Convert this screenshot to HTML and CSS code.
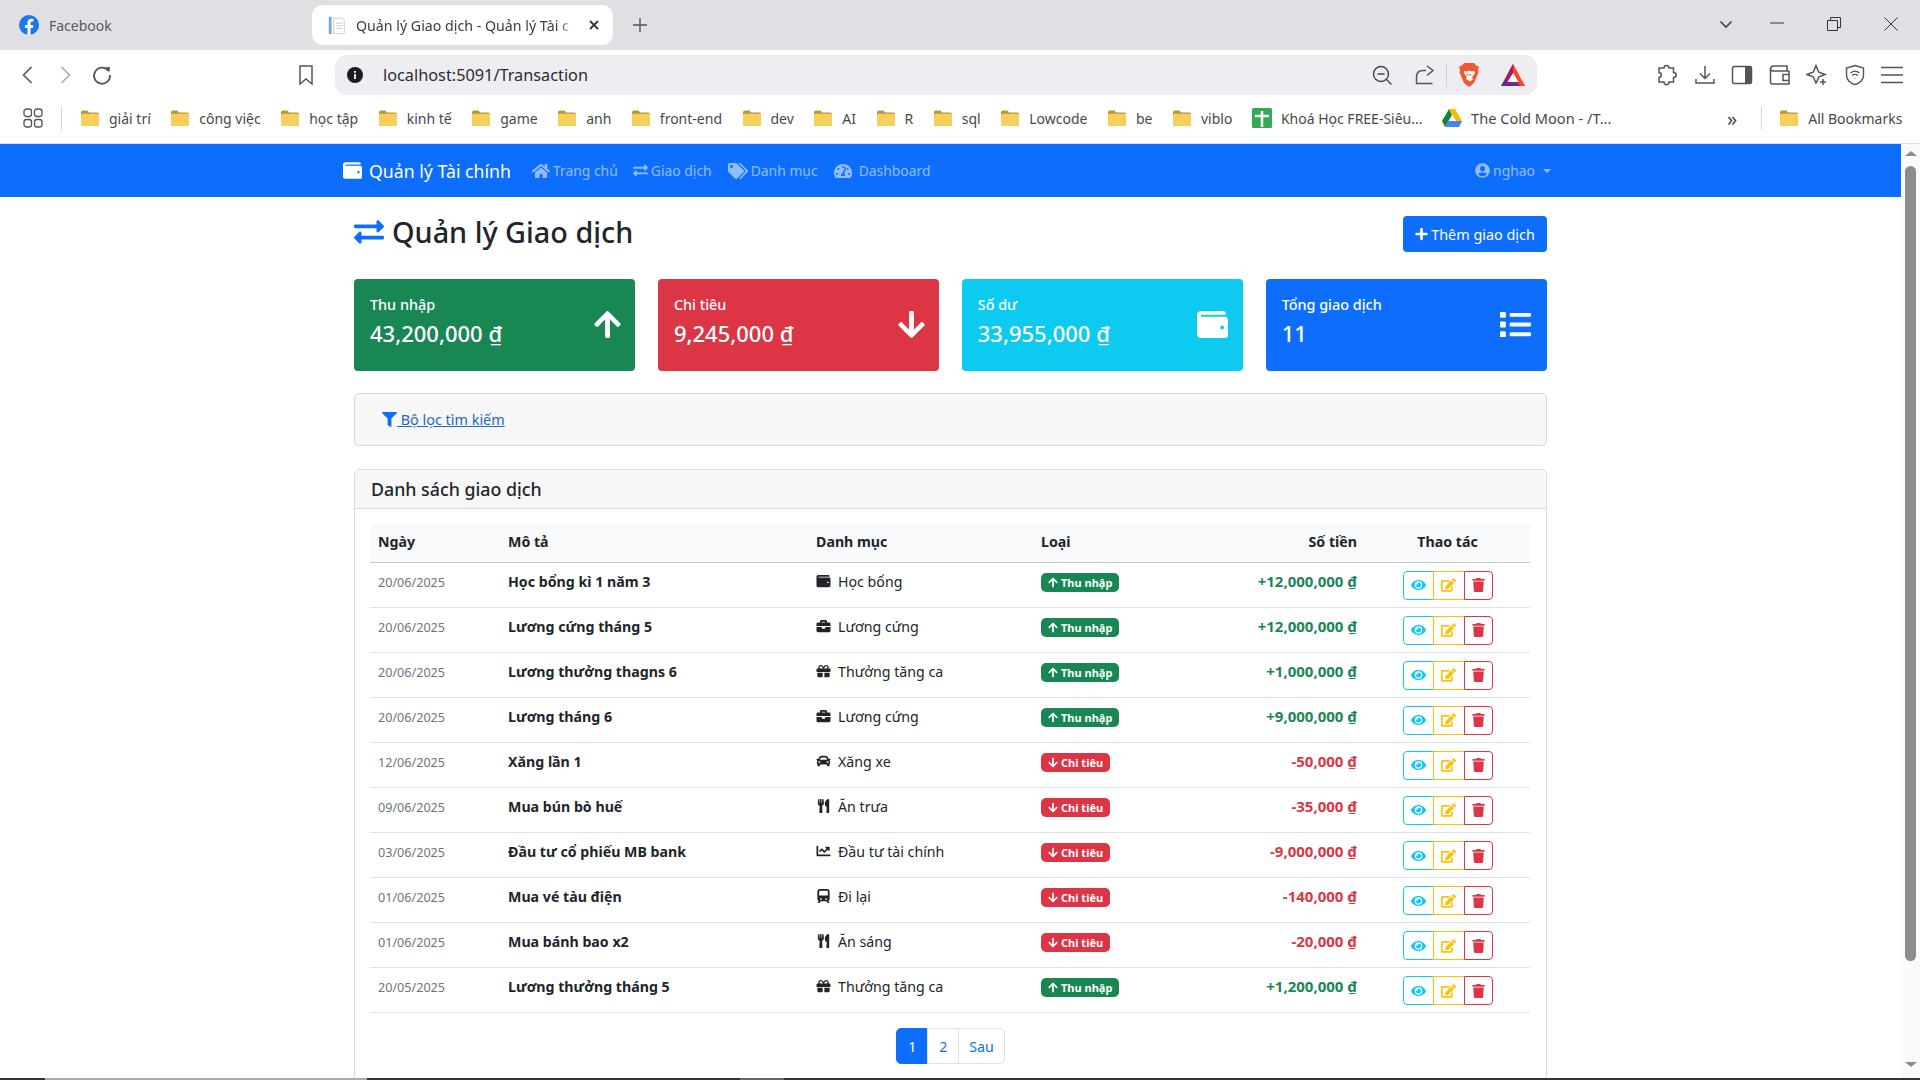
FILE: index.html

```html
<!DOCTYPE html>
<html lang="vi">
<head>
  <meta charset="UTF-8" />
  <meta name="viewport" content="width=device-width, initial-scale=1.0" />
  <title>Quản lý Giao dịch - Quản lý Tài chính</title>
  <link rel="stylesheet" href="styles.css">
</head>
<body>

  <!-- icon sprite -->
  <svg class="sprite" xmlns="http://www.w3.org/2000/svg">
    <symbol id="i-up" viewBox="0 0 448 512"><path d="M34.9 289.5l-22.2-22.2c-9.4-9.4-9.4-24.6 0-33.9L207 39c9.4-9.4 24.6-9.4 33.9 0l194.3 194.3c9.4 9.4 9.4 24.6 0 33.9L413 289.4c-9.5 9.5-25 9.3-34.3-.4L264 168.6V456c0 13.3-10.7 24-24 24h-32c-13.3 0-24-10.7-24-24V168.6L69.2 289.1c-9.3 9.8-24.8 10-34.3.4z"/></symbol>
    <symbol id="i-down" viewBox="0 0 448 512"><path d="M413.1 222.5l22.2 22.2c9.4 9.4 9.4 24.6 0 33.9L241 473c-9.4 9.4-24.6 9.4-33.9 0L12.7 278.6c-9.4-9.4-9.4-24.6 0-33.9l22.2-22.2c9.5-9.5 25-9.3 34.3.4L184 343.4V56c0-13.3 10.7-24 24-24h32c13.3 0 24 10.7 24 24v287.4l114.8-120.5c9.3-9.8 24.8-10 34.3-.4z"/></symbol>
    <symbol id="i-plus" viewBox="0 0 448 512"><path d="M416 208H272V64c0-17.67-14.33-32-32-32h-32c-17.67 0-32 14.33-32 32v144H32c-17.67 0-32 14.33-32 32v32c0 17.67 14.33 32 32 32h144v144c0 17.67 14.33 32 32 32h32c17.67 0 32-14.33 32-32V304h144c17.67 0 32-14.33 32-32v-32c0-17.67-14.33-32-32-32z"/></symbol>
    <symbol id="i-exchange" viewBox="0 0 512 512"><path d="M0 168v-16c0-13.255 10.745-24 24-24h360V80c0-21.367 25.899-32.042 40.971-16.971l80 80c9.372 9.373 9.372 24.569 0 33.941l-80 80C409.956 271.982 384 261.456 384 240v-48H24c-13.255 0-24-10.745-24-24zm488 152H128v-48c0-21.314-25.862-32.08-40.971-16.971l-80 80c-9.372 9.373-9.372 24.569 0 33.941l80 80C102.057 463.997 128 453.437 128 432v-48h360c13.255 0 24-10.745 24-24v-16c0-13.255-10.745-24-24-24z"/></symbol>
    <symbol id="i-wallet" viewBox="0 0 512 512"><path d="M461.2 128H80c-8.84 0-16-7.16-16-16s7.16-16 16-16h384c8.84 0 16-7.16 16-16 0-26.51-21.49-48-48-48H64C28.65 32 0 60.65 0 96v320c0 35.35 28.65 64 64 64h397.2c28.02 0 50.8-21.53 50.8-48V176c0-26.47-22.78-48-50.8-48zM416 336c-17.67 0-32-14.33-32-32s14.33-32 32-32 32 14.33 32 32-14.33 32-32 32z"/></symbol>
    <symbol id="i-list" viewBox="0 0 512 512"><path d="M80 368H16a16 16 0 0 0-16 16v64a16 16 0 0 0 16 16h64a16 16 0 0 0 16-16v-64a16 16 0 0 0-16-16zm0-320H16A16 16 0 0 0 0 64v64a16 16 0 0 0 16 16h64a16 16 0 0 0 16-16V64a16 16 0 0 0-16-16zm0 160H16a16 16 0 0 0-16 16v64a16 16 0 0 0 16 16h64a16 16 0 0 0 16-16v-64a16 16 0 0 0-16-16zm416 176H176a16 16 0 0 0-16 16v32a16 16 0 0 0 16 16h320a16 16 0 0 0 16-16v-32a16 16 0 0 0-16-16zm0-320H176a16 16 0 0 0-16 16v32a16 16 0 0 0 16 16h320a16 16 0 0 0 16-16V80a16 16 0 0 0-16-16zm0 160H176a16 16 0 0 0-16 16v32a16 16 0 0 0 16 16h320a16 16 0 0 0 16-16v-32a16 16 0 0 0-16-16z"/></symbol>
    <symbol id="i-filter" viewBox="0 0 512 512"><path d="M487.976 0H24.028C2.71 0-8.047 25.866 7.058 40.971L192 225.941V432c0 7.831 3.821 15.17 10.237 19.662l80 55.98C298.02 518.69 320 507.493 320 487.98V225.941l184.947-184.97C520.021 25.896 509.338 0 487.976 0z"/></symbol>
    <symbol id="i-trash" viewBox="0 0 448 512"><path d="M432 32H312l-9.4-18.7A24 24 0 0 0 281.1 0H166.8a23.72 23.72 0 0 0-21.4 13.3L136 32H16A16 16 0 0 0 0 48v32a16 16 0 0 0 16 16h416a16 16 0 0 0 16-16V48a16 16 0 0 0-16-16zM53.2 467a48 48 0 0 0 47.9 45h245.8a48 48 0 0 0 47.9-45L416 128H32z"/></symbol>
    <symbol id="i-eye" viewBox="0 0 576 512"><path d="M572.52 241.4C518.29 135.59 410.93 64 288 64S57.68 135.64 3.48 241.41a32.35 32.35 0 0 0 0 29.19C57.71 376.41 165.07 448 288 448s230.32-71.64 284.52-177.41a32.35 32.35 0 0 0 0-29.19zM288 400a144 144 0 1 1 144-144 143.93 143.93 0 0 1-144 144zm0-240a95.31 95.31 0 0 0-25.31 3.79 47.85 47.85 0 0 1-66.9 66.9A95.78 95.78 0 1 0 288 160z"/></symbol>
    <symbol id="i-edit" viewBox="0 0 576 512"><path d="M402.6 83.2l90.2 90.2c3.8 3.8 3.8 10 0 13.8L274.4 405.6l-92.8 10.3c-12.4 1.4-22.9-9.1-21.5-21.5l10.3-92.8L388.8 83.2c3.8-3.8 10-3.8 13.8 0zm162-22.9l-48.8-48.8c-15.2-15.2-39.9-15.2-55.2 0l-35.4 35.4c-3.8 3.8-3.8 10 0 13.8l90.2 90.2c3.8 3.8 10 3.8 13.8 0l35.4-35.4c15.2-15.3 15.2-40 0-55.2zM384 346.2V448H64V128h229.8c3.2 0 6.2-1.3 8.5-3.5l40-40c7.6-7.6 2.2-20.5-8.5-20.5H48C21.5 64 0 85.5 0 112v352c0 26.5 21.5 48 48 48h352c26.5 0 48-21.5 48-48V306.2c0-10.7-12.9-16-20.5-8.5l-40 40c-2.2 2.3-3.5 5.3-3.5 8.5z"/></symbol>
    <symbol id="i-home" viewBox="0 0 576 512"><path d="M280.37 148.26L96 300.11V464a16 16 0 0 0 16 16l112.06-.29a16 16 0 0 0 15.92-16V368a16 16 0 0 1 16-16h64a16 16 0 0 1 16 16v95.64a16 16 0 0 0 16 16.05L464 480a16 16 0 0 0 16-16V300L295.67 148.26a12.19 12.19 0 0 0-15.3 0zM571.6 251.47L488 182.56V44.05a12 12 0 0 0-12-12h-56a12 12 0 0 0-12 12v72.61L318.47 43a48 48 0 0 0-61 0L4.34 251.47a12 12 0 0 0-1.6 16.9l25.5 31A12 12 0 0 0 45.15 301l235.22-193.74a12.19 12.19 0 0 1 15.3 0L530.9 301a12 12 0 0 0 16.9-1.6l25.5-31a12 12 0 0 0-1.7-16.93z"/></symbol>
    <symbol id="i-tags" viewBox="0 0 640 512"><path d="M497.941 225.941L286.059 14.059A48 48 0 0 0 252.118 0H48C21.49 0 0 21.49 0 48v204.118a48 48 0 0 0 14.059 33.941l211.882 211.882c18.744 18.745 49.136 18.746 67.882 0l204.118-204.118c18.745-18.745 18.745-49.137 0-67.882zM112 160c-26.51 0-48-21.49-48-48s21.49-48 48-48 48 21.49 48 48-21.49 48-48 48zm513.941 133.823L421.823 497.941c-18.745 18.745-49.137 18.745-67.882 0l-.36-.36L527.64 323.522c16.999-16.999 26.36-39.6 26.36-63.64s-9.362-46.641-26.36-63.64L331.397 0h48.721a48 48 0 0 1 33.941 14.059l211.882 211.882c18.745 18.745 18.745 49.137 0 67.882z"/></symbol>
    <symbol id="i-user" viewBox="0 0 496 512"><path d="M248 8C111 8 0 119 0 256s111 248 248 248 248-111 248-248S385 8 248 8zm0 96c48.6 0 88 39.4 88 88s-39.4 88-88 88-88-39.4-88-88 39.4-88 88-88zm0 344c-58.7 0-111.3-26.6-146.5-68.2 18.8-35.4 55.6-59.8 98.5-59.8 2.4 0 4.8.4 7.1 1.1 13 4.2 26.6 6.9 40.9 6.9 14.3 0 28-2.7 40.9-6.9 2.3-.7 4.7-1.1 7.1-1.1 42.9 0 79.7 24.4 98.5 59.8C359.3 421.4 306.7 448 248 448z"/></symbol>
    <symbol id="i-gauge" viewBox="0 0 576 512"><path d="M288 32C128.94 32 0 160.94 0 320c0 52.8 14.25 102.26 39.06 144.8 5.61 9.62 16.3 15.2 27.44 15.2h443c11.14 0 21.83-5.58 27.44-15.2C561.75 422.26 576 372.8 576 320c0-159.06-128.94-288-288-288zm0 64c14.71 0 26.58 10.13 30.32 23.65-1.11 2.26-2.64 4.23-3.45 6.67l-9.22 27.67c-5.13 3.49-10.97 6.01-17.64 6.01-17.67 0-32-14.33-32-32S270.33 96 288 96zM96 384c-17.67 0-32-14.33-32-32s14.33-32 32-32 32 14.33 32 32-14.33 32-32 32zm48-160c-17.67 0-32-14.33-32-32s14.33-32 32-32 32 14.33 32 32-14.33 32-32 32zm246.77-72.41l-61.33 184C343.13 347.33 352 364.54 352 384c0 11.72-3.38 22.55-8.88 32H232.88c-5.5-9.45-8.88-20.28-8.88-32 0-33.94 26.5-61.43 59.9-63.59l61.34-184.01c4.17-12.56 17.73-19.45 30.36-15.17 12.57 4.19 19.35 17.79 15.17 30.36zm14.66 57.2l15.52-46.55c3.47-1.29 7.13-2.23 11.05-2.23 17.67 0 32 14.33 32 32s-14.33 32-32 32c-11.38-.01-20.89-6.28-26.57-15.22zM480 384c-17.67 0-32-14.33-32-32s14.33-32 32-32 32 14.33 32 32-14.33 32-32 32z"/></symbol>
    <symbol id="i-briefcase" viewBox="0 0 512 512"><path d="M320 336c0 8.84-7.16 16-16 16h-96c-8.84 0-16-7.16-16-16v-48H0v144c0 25.6 22.4 48 48 48h416c25.6 0 48-22.4 48-48V288H320v48zm144-208h-80V80c0-25.6-22.4-48-48-48H176c-25.6 0-48 22.4-48 48v48H48c-25.6 0-48 22.4-48 48v80h512v-80c0-25.6-22.4-48-48-48zm-144 0H192V96h128v32z"/></symbol>
    <symbol id="i-gift" viewBox="0 0 512 512"><path d="M32 448c0 17.7 14.3 32 32 32h160V320H32v128zm256 32h160c17.7 0 32-14.3 32-32V320H288v160zm192-320h-42.1c6.2-12.1 10.1-25.5 10.1-40 0-48.5-39.5-88-88-88-41.6 0-68.5 21.3-103 68.3-34.5-47-61.4-68.3-103-68.3-48.5 0-88 39.5-88 88 0 14.5 3.8 27.9 10.1 40H32c-17.7 0-32 14.3-32 32v80c0 8.8 7.2 16 16 16h480c8.8 0 16-7.2 16-16v-80c0-17.7-14.3-32-32-32zm-326.1 0c-22.1 0-40-17.9-40-40s17.9-40 40-40c19.9 0 34.6 3.3 86.1 80h-86.1zm206.1 0h-86.1c51.4-76.5 65.7-80 86.1-80 22.1 0 40 17.9 40 40s-17.9 40-40 40z"/></symbol>
    <symbol id="i-car" viewBox="0 0 512 512"><path d="M499.99 176h-59.87l-16.64-41.6C406.38 91.63 365.57 64 319.5 64h-127c-46.06 0-86.88 27.63-103.99 70.4L71.87 176H12.01C4.2 176-1.53 183.34.37 190.91l6 24C7.7 220.25 12.5 224 18.01 224h20.07C24.65 235.73 16 252.78 16 272v48c0 16.12 6.16 30.67 16 41.93V416c0 17.67 14.33 32 32 32h32c17.67 0 32-14.33 32-32v-32h256v32c0 17.67 14.33 32 32 32h32c17.67 0 32-14.33 32-32v-54.07c9.84-11.25 16-25.8 16-41.93v-48c0-19.22-8.65-36.27-22.07-48H494c5.51 0 10.31-3.75 11.64-9.09l6-24c1.89-7.57-3.84-14.91-11.65-14.91zm-352.06-17.83c7.29-18.22 24.94-30.17 44.57-30.17h127c19.63 0 37.28 11.95 44.57 30.17L384 208H128l19.93-49.83zM96 319.8c-19.2 0-32-12.76-32-31.9S76.8 256 96 256s48 28.71 48 47.85-28.8 15.95-48 15.95zm320 0c-19.2 0-48 3.19-48-15.95S396.8 256 416 256s32 12.76 32 31.9-12.8 31.9-32 31.9z"/></symbol>
    <symbol id="i-utensils" viewBox="0 0 416 512"><path d="M207.9 15.2c.8 4.7 16.1 94.5 16.1 128.8 0 52.3-27.8 89.6-68.9 104.6L168 486.7c.7 13.7-10.2 25.3-24 25.3H80c-13.7 0-24.7-11.5-24-25.3l12.9-238.1C27.7 233.6 0 196.2 0 144 0 109.6 15.3 19.9 16.1 15.2 19.3-5.1 61.4-5.4 64 16.3v141.2c1.3 3.4 15.1 3.2 16 0 1.4-25.3 7.9-139.2 8-141.8 3.3-20.8 44.7-20.8 47.9 0 .2 2.7 6.6 116.5 8 141.8.9 3.2 14.8 3.4 16 0V16.3c2.6-21.6 44.8-21.4 48-1.1zm119.2 285.7l-15 185.1c-1.2 14 9.9 26 23.9 26h56c13.3 0 24-10.7 24-24V24c0-13.2-10.7-24-24-24-82.5 0-221.4 178.5-64.9 300.9z"/></symbol>
    <symbol id="i-chart" viewBox="0 0 512 512"><path d="M496 384H64V80c0-8.84-7.16-16-16-16H16C7.16 64 0 71.16 0 80v336c0 17.67 14.33 32 32 32h464c8.84 0 16-7.16 16-16v-32c0-8.84-7.16-16-16-16zM464 96H345.94c-21.38 0-32.09 25.85-16.97 40.97l32.4 32.4L288 242.75l-73.37-73.37c-12.5-12.5-32.76-12.5-45.25 0l-68.69 68.69c-6.25 6.25-6.25 16.38 0 22.63l22.62 22.62c6.25 6.25 16.38 6.25 22.63 0L192 237.25l73.37 73.37c12.5 12.5 32.76 12.5 45.25 0l96-96 32.4 32.4c15.12 15.12 40.97 4.41 40.97-16.97V112c.01-8.84-7.15-16-15.99-16z"/></symbol>
    <symbol id="i-bus" viewBox="0 0 448 512"><path fill-rule="evenodd" d="M96 0h256c53 0 96 43 96 96v256c0 38-22 70-54 86l38 48c8 10-1 26-14 26h-36c-5 0-10-2-13-6l-49-60H128l-49 60c-3 4-8 6-13 6H30c-13 0-22-16-14-26l38-48C22 422 0 390 0 352V96C0 43 43 0 96 0zM64 112v112c0 9 7 16 16 16h288c9 0 16-7 16-16V112c0-26-22-48-48-48H112c-26 0-48 22-48 48zm64 224a32 32 0 1 0 0 64 32 32 0 0 0 0-64zm192 0a32 32 0 1 0 0 64 32 32 0 0 0 0-64z"/></symbol>
    <symbol id="i-folder" viewBox="0 0 20 20"><path fill="#b8963c" d="M1 4.500C1 3.400 1.900 2.500 3 2.500h4.500l1.600 2H17c1.100 0 2 .9 2 2V16c0 1.100-.9 2-2 2H3c-1.100 0-2-.9-2-2z"/><path fill="#f7cf5a" d="M1 7c0-.8.7-1.200 1.500-1.200h15c.8 0 1.500.4 1.500 1.200v9c0 1.100-.9 2-2 2H3c-1.100 0-2-.9-2-2z"/></symbol>
  </svg>

  <!-- trinh duyet -->
  <div class="tabstrip">
    <div class="tab">
      <svg class="favicon" viewBox="0 0 20 20"><circle cx="10" cy="10" r="10" fill="#1877f2"/><path fill="#fff" d="M13.900 12.900l.45-2.900h-2.780V8.100c0-.8.4-1.570 1.640-1.570h1.260V4.060s-1.150-.2-2.240-.2c-2.290 0-3.780 1.390-3.780 3.900V10H5.900v2.900h2.550V20h3.120v-7.100z"/></svg>
      <span class="tab-title">Facebook</span>
    </div>
    <div class="tab tab-active">
      <svg class="favicon" viewBox="0 0 18 22"><rect x="0" y="2" width="3" height="19" fill="#6aa9d8"/><path fill="none" stroke="#c4c8cf" d="M5.500 3.500h9l2.500 2.500v14.500H5.500z"/><path stroke="#c4c8cf" d="M8 9h7M8 12h7M8 15h7"/></svg>
      <span class="tab-title">Quản lý Giao dịch - Quản lý Tài c</span>
      <svg class="tab-close" viewBox="0 0 12 12"><path d="M2 2l8 8M10 2l-8 8" stroke="#333" stroke-width="1.800"/></svg>
    </div>
    <svg class="tab-new" viewBox="0 0 14 14"><path d="M7 0v14M0 7h14" stroke="#555" stroke-width="1.400"/></svg>
    <div class="win-buttons">
      <svg class="win-icon win-chevron" viewBox="0 0 14 14"><path d="M1.500 4.500L7 10l5.500-5.500" fill="none" stroke="#444" stroke-width="1.600"/></svg>
      <svg class="win-icon" viewBox="0 0 14 14"><path d="M0 6h14" stroke="#333" stroke-width="1"/></svg>
      <svg class="win-icon" viewBox="0 0 14 14"><path d="M.5 3.500h10v10H.5zM3.500 3.500v-3h10v10h-3" fill="none" stroke="#333"/></svg>
      <svg class="win-icon" viewBox="0 0 14 14"><path d="M.5.500l13 13M13.500.500l-13 13" stroke="#333"/></svg>
    </div>
  </div>

  <div class="toolbar">
    <svg class="tb-icon" viewBox="0 0 22 22"><path d="M14.500 3L6.500 11l8 8" fill="none" stroke="#555" stroke-width="1.600"/></svg>
    <svg class="tb-icon tb-forward" viewBox="0 0 22 22"><path d="M7.500 3l8 8-8 8" fill="none" stroke="#aaa" stroke-width="1.600"/></svg>
    <svg class="tb-icon tb-reload" viewBox="0 0 22 22"><path d="M17.500 7A8 8 0 1 0 19 11" fill="none" stroke="#555" stroke-width="1.800"/><path d="M13.500 3.500l5 4.500 .5-5z" fill="#555"/></svg>
    <svg class="tb-icon tb-bookmark" viewBox="0 0 22 22"><path d="M5 2h12v18l-6-5-6 5z" fill="none" stroke="#555" stroke-width="1.500"/></svg>
    <div class="address">
      <svg class="addr-info" viewBox="0 0 16 16"><circle cx="8" cy="8" r="8" fill="#1c1c20"/><path d="M8 7v5M8 4v1.700" stroke="#fff" stroke-width="1.800"/></svg>
      <span class="addr-url">localhost:5091/Transaction</span>
      <svg class="tb-icon addr-zoom" viewBox="0 0 22 22"><circle cx="10" cy="10" r="7.500" fill="none" stroke="#444" stroke-width="1.400"/><path d="M15.500 15.500l5 5M6.500 10h7" stroke="#444" stroke-width="1.400"/></svg>
      <svg class="tb-icon addr-share" viewBox="0 0 22 22"><path d="M12 6.500H9C5 6.500 2.500 9 2.500 13v6.500h16M13 2l6 4.500-6 5" fill="none" stroke="#555" stroke-width="1.500"/></svg>
      <span class="addr-sep"></span>
      <svg class="addr-brave" viewBox="0 0 20 24"><path fill="#f1592a" d="M5 0h10l2 2.500 3 1-1 3.500.5 2.500L15 20l-5 4-5-4L.5 9.500 1 7 0 3.500l3-1z"/><path fill="#fff" d="M5 8l3 .5 2-1 2 1 3-.5 1 2-3 4 1 2-3 2.500L7 16l1-2-3-4z"/><path fill="#f1592a" d="M8 11h1.500v1.500H8zM10.500 11H12v1.500h-1.500z"/></svg>
      <svg class="addr-bat" viewBox="0 0 24 22"><path fill="#ff4724" d="M12 0l6 11H6z"/><path fill="#9e1f63" d="M12 0L6 11 0 22h6l6-11z"/><path fill="#662d91" d="M0 22h24l-3-5H3z"/><path fill="#ff4724" d="M12 0l12 22h-5L12 9z"/><path fill="#fff" d="M12 9l5.500 9h-11z"/></svg>
    </div>
    <div class="tb-right">
      <svg class="tb-icon" viewBox="0 0 22 22"><path d="M8 4c0-3.500 5-3.500 5 0h4.500v4.500c3.500 0 3.500 5 0 5V18H13c0 3.500-5 3.500-5 0H3v-4.500c3 0 3-5 0-5V4z" fill="none" stroke="#555" stroke-width="1.500"/></svg>
      <svg class="tb-icon" viewBox="0 0 22 22"><path d="M11 2v12M6 9.500l5 5 5-5M2 15v4h18v-4" fill="none" stroke="#555" stroke-width="1.500"/></svg>
      <svg class="tb-icon" viewBox="0 0 22 22"><rect x="1.500" y="2.500" width="19" height="17" rx="2" fill="none" stroke="#555" stroke-width="1.500"/><rect x="14" y="2.500" width="6.500" height="17" fill="#555"/></svg>
      <svg class="tb-icon" viewBox="0 0 22 22"><path d="M20 7H4C2 7 1.500 5.500 1.500 4.500S3 2 4 2h14v5M1.500 4.500V18c0 1 1 2 2 2H20V7M20 10.500h-6v6h6" fill="none" stroke="#555" stroke-width="1.500"/></svg>
      <svg class="tb-icon" viewBox="0 0 22 22"><path d="M10 1.500l2.500 6.500 6.500 2.500-6 2.300-3 6.200-2.800-6.200L1 10.500 7.500 8z" fill="none" stroke="#555" stroke-width="1.500"/><path d="M17 15v6M14 18h6" stroke="#555" stroke-width="1.500"/></svg>
      <svg class="tb-icon" viewBox="0 0 22 22"><path d="M11 1.500L19.500 4v7c0 5-4 8.500-8.500 9.500C6.500 19.500 2.500 16 2.500 11V4z" fill="none" stroke="#555" stroke-width="1.400"/><path d="M6.500 9c3-2.500 6-2.500 9 0M8 11.500c2-1.500 4-1.500 6 0M11 14v.500" fill="none" stroke="#555" stroke-width="1.400"/></svg>
      <svg class="tb-icon" viewBox="0 0 22 22"><path d="M0 3.500h22M0 11h22M0 18.500h22" stroke="#555" stroke-width="1.500"/></svg>
    </div>
  </div>

  <div class="bookmarks">
    <svg class="bm-apps" viewBox="0 0 20 20"><rect x="1" y="1" width="7.500" height="7.500" rx="2.500" fill="none" stroke="#555" stroke-width="1.300"/><rect x="11.500" y="1" width="7.500" height="7.500" rx="2.500" fill="none" stroke="#555" stroke-width="1.300"/><rect x="1" y="11.500" width="7.500" height="7.500" rx="2.500" fill="none" stroke="#555" stroke-width="1.300"/><rect x="11.500" y="11.500" width="7.500" height="7.500" rx="2.500" fill="none" stroke="#555" stroke-width="1.300"/></svg>
    <span class="bm-sep"></span>
    <div class="bm-list">
      <span class="bm"><svg class="bm-icon"><use href="#i-folder"/></svg>giải trí</span>
      <span class="bm"><svg class="bm-icon"><use href="#i-folder"/></svg>công việc</span>
      <span class="bm"><svg class="bm-icon"><use href="#i-folder"/></svg>học tập</span>
      <span class="bm"><svg class="bm-icon"><use href="#i-folder"/></svg>kinh tế</span>
      <span class="bm"><svg class="bm-icon"><use href="#i-folder"/></svg>game</span>
      <span class="bm"><svg class="bm-icon"><use href="#i-folder"/></svg>anh</span>
      <span class="bm"><svg class="bm-icon"><use href="#i-folder"/></svg>front-end</span>
      <span class="bm"><svg class="bm-icon"><use href="#i-folder"/></svg>dev</span>
      <span class="bm"><svg class="bm-icon"><use href="#i-folder"/></svg>AI</span>
      <span class="bm"><svg class="bm-icon"><use href="#i-folder"/></svg>R</span>
      <span class="bm"><svg class="bm-icon"><use href="#i-folder"/></svg>sql</span>
      <span class="bm"><svg class="bm-icon"><use href="#i-folder"/></svg>Lowcode</span>
      <span class="bm"><svg class="bm-icon"><use href="#i-folder"/></svg>be</span>
      <span class="bm"><svg class="bm-icon"><use href="#i-folder"/></svg>viblo</span>
      <span class="bm"><svg class="bm-icon" viewBox="0 0 20 20"><rect width="20" height="20" rx="1.500" fill="#34a853"/><path d="M10 3v16M3 8h14" stroke="#fff" stroke-width="2.500"/></svg>Khoá Học FREE-Siêu...</span>
      <span class="bm bm-wide"><svg class="bm-icon" viewBox="0 0 20 18"><path fill="#fbbc04" d="M7 0h6l7 12h-6z"/><path fill="#188038" d="M7 0l3 6L3 18 0 12z"/><path fill="#4285f4" d="M6.500 12H20l-3 6H3z"/></svg>The Cold Moon - /T...</span>
    </div>
    <span class="bm-more">»</span>
    <span class="bm-sep bm-sep-right"></span>
    <span class="bm"><svg class="bm-icon"><use href="#i-folder"/></svg>All Bookmarks</span>
  </div>

  <!-- trang web -->
  <div class="viewport">
    <div class="page">
      <nav class="navbar">
        <div class="navbar-inner">
          <div class="nav-left">
            <a class="brand"><svg class="icon brand-icon"><use href="#i-wallet"/></svg>Quản lý Tài chính</a>
            <a class="nav-link"><svg class="icon nav-home"><use href="#i-home"/></svg>Trang chủ</a>
            <a class="nav-link"><svg class="icon nav-exchange"><use href="#i-exchange"/></svg>Giao dịch</a>
            <a class="nav-link"><svg class="icon nav-tags"><use href="#i-tags"/></svg>Danh mục</a>
            <a class="nav-link"><svg class="icon nav-gauge"><use href="#i-gauge"/></svg>Dashboard</a>
          </div>
          <a class="nav-link nav-user"><svg class="icon nav-usericon"><use href="#i-user"/></svg>nghao<span class="caret"></span></a>
        </div>
      </nav>

      <main class="container">
        <div class="page-head">
          <h1 class="page-title"><svg class="icon title-icon"><use href="#i-exchange"/></svg>Quản lý Giao dịch</h1>
          <a class="btn-add"><svg class="icon add-icon"><use href="#i-plus"/></svg>Thêm giao dịch</a>
        </div>

        <div class="stats">
          <div class="stat stat-green">
            <div><div class="stat-label">Thu nhập</div><div class="stat-value">43,200,000 ₫</div></div>
            <svg class="icon stat-icon stat-arrow"><use href="#i-up"/></svg>
          </div>
          <div class="stat stat-red">
            <div><div class="stat-label">Chi tiêu</div><div class="stat-value">9,245,000 ₫</div></div>
            <svg class="icon stat-icon stat-arrow"><use href="#i-down"/></svg>
          </div>
          <div class="stat stat-cyan">
            <div><div class="stat-label">Số dư</div><div class="stat-value">33,955,000 ₫</div></div>
            <svg class="icon stat-icon stat-wallet"><use href="#i-wallet"/></svg>
          </div>
          <div class="stat stat-blue">
            <div><div class="stat-label">Tổng giao dịch</div><div class="stat-value">11</div></div>
            <svg class="icon stat-icon"><use href="#i-list"/></svg>
          </div>
        </div>

        <div class="filter-card">
          <a class="filter-link"><svg class="icon filter-icon"><use href="#i-filter"/></svg> Bộ lọc tìm kiếm</a>
        </div>

        <section class="list-card">
          <h2 class="list-title">Danh sách giao dịch</h2>
          <div class="list-body">
            <table class="tx-table">
              <colgroup>
                <col class="col-date"><col class="col-desc"><col class="col-cat"><col class="col-type"><col class="col-amount"><col class="col-act">
              </colgroup>
              <thead>
                <tr>
                  <th>Ngày</th><th>Mô tả</th><th>Danh mục</th><th>Loại</th><th class="num">Số tiền</th><th class="center">Thao tác</th>
                </tr>
              </thead>
              <tbody>
                <tr>
                  <td class="date">20/06/2025</td><td class="desc">Học bổng kì 1 năm 3</td>
                  <td><svg class="icon cat-icon"><use href="#i-wallet"/></svg>Học bổng</td>
                  <td><span class="badge badge-in"><svg class="icon badge-icon"><use href="#i-up"/></svg>Thu nhập</span></td>
                  <td class="num amount-in">+12,000,000 ₫</td>
                  <td class="center"><div class="actions"><a class="act act-view"><svg class="icon"><use href="#i-eye"/></svg></a><a class="act act-edit"><svg class="icon"><use href="#i-edit"/></svg></a><a class="act act-del"><svg class="icon"><use href="#i-trash"/></svg></a></div></td>
                </tr>
                <tr>
                  <td class="date">20/06/2025</td><td class="desc">Lương cứng tháng 5</td>
                  <td><svg class="icon cat-icon"><use href="#i-briefcase"/></svg>Lương cứng</td>
                  <td><span class="badge badge-in"><svg class="icon badge-icon"><use href="#i-up"/></svg>Thu nhập</span></td>
                  <td class="num amount-in">+12,000,000 ₫</td>
                  <td class="center"><div class="actions"><a class="act act-view"><svg class="icon"><use href="#i-eye"/></svg></a><a class="act act-edit"><svg class="icon"><use href="#i-edit"/></svg></a><a class="act act-del"><svg class="icon"><use href="#i-trash"/></svg></a></div></td>
                </tr>
                <tr>
                  <td class="date">20/06/2025</td><td class="desc">Lương thưởng thagns 6</td>
                  <td><svg class="icon cat-icon"><use href="#i-gift"/></svg>Thưởng tăng ca</td>
                  <td><span class="badge badge-in"><svg class="icon badge-icon"><use href="#i-up"/></svg>Thu nhập</span></td>
                  <td class="num amount-in">+1,000,000 ₫</td>
                  <td class="center"><div class="actions"><a class="act act-view"><svg class="icon"><use href="#i-eye"/></svg></a><a class="act act-edit"><svg class="icon"><use href="#i-edit"/></svg></a><a class="act act-del"><svg class="icon"><use href="#i-trash"/></svg></a></div></td>
                </tr>
                <tr>
                  <td class="date">20/06/2025</td><td class="desc">Lương tháng 6</td>
                  <td><svg class="icon cat-icon"><use href="#i-briefcase"/></svg>Lương cứng</td>
                  <td><span class="badge badge-in"><svg class="icon badge-icon"><use href="#i-up"/></svg>Thu nhập</span></td>
                  <td class="num amount-in">+9,000,000 ₫</td>
                  <td class="center"><div class="actions"><a class="act act-view"><svg class="icon"><use href="#i-eye"/></svg></a><a class="act act-edit"><svg class="icon"><use href="#i-edit"/></svg></a><a class="act act-del"><svg class="icon"><use href="#i-trash"/></svg></a></div></td>
                </tr>
                <tr>
                  <td class="date">12/06/2025</td><td class="desc">Xăng lần 1</td>
                  <td><svg class="icon cat-icon"><use href="#i-car"/></svg>Xăng xe</td>
                  <td><span class="badge badge-out"><svg class="icon badge-icon"><use href="#i-down"/></svg>Chi tiêu</span></td>
                  <td class="num amount-out">-50,000 ₫</td>
                  <td class="center"><div class="actions"><a class="act act-view"><svg class="icon"><use href="#i-eye"/></svg></a><a class="act act-edit"><svg class="icon"><use href="#i-edit"/></svg></a><a class="act act-del"><svg class="icon"><use href="#i-trash"/></svg></a></div></td>
                </tr>
                <tr>
                  <td class="date">09/06/2025</td><td class="desc">Mua bún bò huế</td>
                  <td><svg class="icon cat-icon"><use href="#i-utensils"/></svg>Ăn trưa</td>
                  <td><span class="badge badge-out"><svg class="icon badge-icon"><use href="#i-down"/></svg>Chi tiêu</span></td>
                  <td class="num amount-out">-35,000 ₫</td>
                  <td class="center"><div class="actions"><a class="act act-view"><svg class="icon"><use href="#i-eye"/></svg></a><a class="act act-edit"><svg class="icon"><use href="#i-edit"/></svg></a><a class="act act-del"><svg class="icon"><use href="#i-trash"/></svg></a></div></td>
                </tr>
                <tr>
                  <td class="date">03/06/2025</td><td class="desc">Đầu tư cổ phiếu MB bank</td>
                  <td><svg class="icon cat-icon"><use href="#i-chart"/></svg>Đầu tư tài chính</td>
                  <td><span class="badge badge-out"><svg class="icon badge-icon"><use href="#i-down"/></svg>Chi tiêu</span></td>
                  <td class="num amount-out">-9,000,000 ₫</td>
                  <td class="center"><div class="actions"><a class="act act-view"><svg class="icon"><use href="#i-eye"/></svg></a><a class="act act-edit"><svg class="icon"><use href="#i-edit"/></svg></a><a class="act act-del"><svg class="icon"><use href="#i-trash"/></svg></a></div></td>
                </tr>
                <tr>
                  <td class="date">01/06/2025</td><td class="desc">Mua vé tàu điện</td>
                  <td><svg class="icon cat-icon"><use href="#i-bus"/></svg>Đi lại</td>
                  <td><span class="badge badge-out"><svg class="icon badge-icon"><use href="#i-down"/></svg>Chi tiêu</span></td>
                  <td class="num amount-out">-140,000 ₫</td>
                  <td class="center"><div class="actions"><a class="act act-view"><svg class="icon"><use href="#i-eye"/></svg></a><a class="act act-edit"><svg class="icon"><use href="#i-edit"/></svg></a><a class="act act-del"><svg class="icon"><use href="#i-trash"/></svg></a></div></td>
                </tr>
                <tr>
                  <td class="date">01/06/2025</td><td class="desc">Mua bánh bao x2</td>
                  <td><svg class="icon cat-icon"><use href="#i-utensils"/></svg>Ăn sáng</td>
                  <td><span class="badge badge-out"><svg class="icon badge-icon"><use href="#i-down"/></svg>Chi tiêu</span></td>
                  <td class="num amount-out">-20,000 ₫</td>
                  <td class="center"><div class="actions"><a class="act act-view"><svg class="icon"><use href="#i-eye"/></svg></a><a class="act act-edit"><svg class="icon"><use href="#i-edit"/></svg></a><a class="act act-del"><svg class="icon"><use href="#i-trash"/></svg></a></div></td>
                </tr>
                <tr>
                  <td class="date">20/05/2025</td><td class="desc">Lương thưởng tháng 5</td>
                  <td><svg class="icon cat-icon"><use href="#i-gift"/></svg>Thưởng tăng ca</td>
                  <td><span class="badge badge-in"><svg class="icon badge-icon"><use href="#i-up"/></svg>Thu nhập</span></td>
                  <td class="num amount-in">+1,200,000 ₫</td>
                  <td class="center"><div class="actions"><a class="act act-view"><svg class="icon"><use href="#i-eye"/></svg></a><a class="act act-edit"><svg class="icon"><use href="#i-edit"/></svg></a><a class="act act-del"><svg class="icon"><use href="#i-trash"/></svg></a></div></td>
                </tr>
              </tbody>
            </table>
            <div class="pagination">
              <a class="page-link page-active">1</a><a class="page-link">2</a><a class="page-link">Sau</a>
            </div>
          </div>
        </section>
      </main>
    </div>

    <div class="scrollbar">
      <span class="sb-up"></span>
      <span class="sb-thumb"></span>
      <span class="sb-down"></span>
    </div>
  </div>

  <div class="taskstrip">
    <span class="ts-dark ts-a"></span><span class="ts-light ts-b"></span><span class="ts-dark ts-c"></span><span class="ts-mid ts-d"></span><span class="ts-dark ts-e"></span>
  </div>

</body>
</html>
```

FILE: styles.css

```css
* {
  box-sizing: border-box;
}
body {
  font-family: "Noto Sans", sans-serif;
  margin: 0;
  width: 1920px;
  height: 1080px;
  overflow: hidden;
  display: flex;
  flex-direction: column;
  background: #fff;
  color: #212529;
}
.sprite {
  width: 0;
  height: 0;
  display: block;
  overflow: hidden;
}
.icon {
  fill: currentColor;
  display: inline-block;
  flex: none;
}

/* browser chrome */
.tabstrip {
  height: 50px;
  flex: none;
  background: #e0e0e4;
  display: flex;
  align-items: flex-start;
  padding-left: 19px;
}
.tab {
  height: 40px;
  margin-top: 5px;
  display: flex;
  align-items: center;
  width: 293px;
  font-size: 14px;
  color: #5a5a5e;
}
.favicon {
  width: 20px;
  height: 20px;
  flex: none;
}
.tab-title {
  margin-left: 10px;
  white-space: nowrap;
}
.tab-active {
  width: 301px;
  background: #fff;
  border-radius: 11px;
  padding: 0 12px 0 16px;
  color: #3c3c40;
}
.tab-active .favicon {
  width: 18px;
}
.tab-active .tab-title {
  width: 220px;
  font-size: 14.200px;
  -webkit-mask-image: linear-gradient(to right, #000 92%, transparent);
  mask-image: linear-gradient(to right, #000 92%, transparent);
}
.tab-close {
  width: 12px;
  height: 12px;
  margin-left: 12px;
  flex: none;
}
.tab-new {
  width: 14px;
  height: 14px;
  margin: 18px 0 0 20px;
}
.win-buttons {
  margin-left: auto;
  display: flex;
  gap: 43px;
  padding: 17px 22px 0 0;
}
.win-icon {
  width: 14px;
  height: 14px;
}
.win-chevron {
  margin-right: -6px;
}
.toolbar {
  height: 45px;
  flex: none;
  display: flex;
  align-items: center;
  padding: 5px 0 0 17px;
}
.tb-icon {
  width: 22px;
  height: 22px;
  flex: none;
}
.tb-forward {
  margin-left: 15px;
}
.tb-reload {
  margin-left: 15px;
}
.tb-bookmark {
  margin-left: 182px;
}
.address {
  width: 1202px;
  height: 40px;
  margin-left: 18px;
  background: #eeeef2;
  border-radius: 12px;
  display: flex;
  align-items: center;
  padding-left: 12px;
}
.addr-info {
  width: 16px;
  height: 16px;
}
.addr-url {
  margin-left: 20px;
  font-size: 16.300px;
  color: #2c2c30;
}
.addr-zoom {
  margin-left: auto;
}
.addr-share {
  margin-left: 21px;
}
.addr-sep {
  width: 1px;
  height: 24px;
  background: #d0d0d4;
  margin-left: 10px;
}
.addr-brave {
  width: 20px;
  height: 24px;
  margin-left: 12px;
}
.addr-bat {
  width: 24px;
  height: 22px;
  margin: 0 12px 0 22px;
}
.tb-right {
  margin-left: auto;
  padding-right: 17px;
  display: flex;
  gap: 15.500px;
}
.bookmarks {
  height: 49px;
  flex: none;
  display: flex;
  align-items: center;
  padding: 0 0 2px 23px;
  border-bottom: 1px solid #d4e2ee;
  font-size: 14px;
  color: #48484c;
}
.bm-apps {
  width: 20px;
  height: 20px;
  flex: none;
}
.bm-sep {
  width: 1px;
  height: 24px;
  background: #d8d8dc;
  margin-left: 18px;
}
.bm-list {
  display: flex;
  gap: 19.500px;
  margin-left: 18px;
  width: 1647px;
}
.bm {
  display: flex;
  align-items: center;
  gap: 9px;
  white-space: nowrap;
}
.bm-wide {
  font-size: 14.600px;
}
.bm-icon {
  width: 20px;
  height: 20px;
  flex: none;
}
.bm-more {
  font-size: 20px;
}
.bm-sep-right {
  margin: 0 17px 0 24px;
}

/* page */
.viewport {
  height: 934px;
  flex: none;
  display: flex;
  overflow: hidden;
}
.page {
  width: 1901px;
  flex: none;
}
.navbar {
  height: 53px;
  background: #0d6efd;
}
.navbar-inner {
  width: 1217px;
  height: 100%;
  margin: 0 auto;
  padding-right: 8px;
  display: flex;
  align-items: center;
  justify-content: space-between;
}
.nav-left {
  display: flex;
  align-items: center;
}
.brand {
  display: flex;
  align-items: center;
  color: #fff;
  font-size: 17.700px;
  margin: 0 21px 0 1px;
}
.brand-icon {
  width: 19px;
  height: 19px;
  margin-right: 7px;
}
.nav-link {
  display: flex;
  align-items: center;
  color: rgba(255, 255, 255, 0.55);
  font-size: 13.900px;
  margin-right: 15px;
}
.nav-home {
  width: 18px;
  height: 16px;
  margin-right: 3px;
}
.nav-exchange {
  width: 15px;
  height: 15px;
  margin-right: 3px;
}
.nav-tags {
  width: 20px;
  height: 16px;
  margin: 0 3px 0 1px;
}
.nav-gauge {
  width: 18px;
  height: 16px;
  margin: 0 7px 0 1px;
}
.nav-user {
  margin-right: 0;
}
.nav-usericon {
  width: 15px;
  height: 15px;
  margin-right: 3px;
}
.caret {
  margin-left: 8px;
  border-top: 4px solid;
  border-left: 4px solid transparent;
  border-right: 4px solid transparent;
}
.container {
  width: 1193px;
  margin: 0 auto;
}
.page-head {
  margin-top: 19px;
  height: 36px;
  display: flex;
  align-items: center;
  justify-content: space-between;
}
.page-title {
  margin: 0;
  padding-bottom: 4px;
  display: flex;
  align-items: center;
  font-size: 28.800px;
  font-weight: 500;
  line-height: 36px;
}
.title-icon {
  width: 30px;
  height: 30px;
  margin-right: 8px;
  color: #0d6efd;
}
.btn-add {
  width: 144px;
  height: 36px;
  background: #0d6efd;
  color: #fff;
  border-radius: 4px;
  display: flex;
  align-items: center;
  justify-content: center;
  font-size: 14.400px;
}
.add-icon {
  width: 13px;
  height: 14px;
  margin-right: 3px;
}
.stats {
  margin-top: 27px;
  display: grid;
  grid-template-columns: repeat(4, 1fr);
  gap: 22.500px;
}
.stat {
  height: 92px;
  border-radius: 4px;
  color: #fff;
  padding: 16px;
  display: flex;
  justify-content: space-between;
}
.stat-green {
  background: #198754;
}
.stat-red {
  background: #dc3545;
}
.stat-cyan {
  background: #0dcaf0;
}
.stat-blue {
  background: #0d6efd;
}
.stat-label {
  font-size: 14.400px;
  font-weight: 500;
  line-height: 20px;
}
.stat-value {
  font-size: 22px;
  font-weight: 500;
  line-height: 28px;
  margin-top: 4px;
}
.stat-icon {
  width: 31px;
  height: 31px;
  margin-top: 14px;
}
.stat-arrow {
  width: 27px;
  margin-right: -2px;
}
.stat-wallet {
  margin-right: -1px;
}
.filter-card {
  margin-top: 22px;
  height: 53px;
  background: #f7f7f7;
  border: 1px solid #d9d9d9;
  border-radius: 5px;
  display: flex;
  align-items: center;
  padding-left: 27px;
}
.filter-link {
  color: #2468c8;
  font-size: 14.400px;
  text-decoration: underline;
}
.filter-icon {
  width: 15px;
  height: 15px;
  color: #0d6efd;
  vertical-align: -2px;
}
.list-card {
  margin-top: 23px;
  height: 640px;
  border: 1px solid #dcdcdc;
  border-radius: 5px;
}
.list-title {
  margin: 0;
  height: 39px;
  padding: 0 16px;
  background: #f7f7f7;
  border-bottom: 1px solid #d9d9d9;
  border-radius: 5px 5px 0 0;
  font-size: 17.800px;
  font-weight: 500;
  line-height: 38px;
}
.list-body {
  padding: 15px 15px 0;
}
.tx-table {
  width: 1160px;
  table-layout: fixed;
  border-collapse: collapse;
  font-size: 14.200px;
}
.col-date {
  width: 130px;
}
.col-desc {
  width: 308px;
}
.col-cat {
  width: 225px;
}
.col-type {
  width: 165px;
}
.col-amount {
  width: 167px;
}
.col-act {
  width: 165px;
}
th {
  height: 38px;
  background: #f8f9fa;
  border-bottom: 1px solid #c8cacc;
  padding: 0 8px 2px;
  text-align: left;
  font-weight: 700;
}
td {
  height: 45.100px;
  padding: 8px 8px 0;
  border-bottom: 1px solid #dee2e6;
  vertical-align: baseline;
  white-space: nowrap;
}
th.num,
td.num {
  text-align: right;
}
th.center,
td.center {
  text-align: center;
}
td.center {
  vertical-align: top;
}
.date {
  font-size: 12.600px;
  color: #6c757d;
}
.desc {
  font-weight: 700;
}
.cat-icon {
  width: 15px;
  height: 14px;
  margin-right: 7px;
  vertical-align: -1px;
}
.badge {
  display: inline-flex;
  align-items: center;
  height: 19px;
  padding: 0 7px;
  border-radius: 5px;
  color: #fff;
  font-size: 11px;
  font-weight: 700;
  position: relative;
  top: 1px;
}
.badge-in {
  background: #198754;
}
.badge-out {
  background: #dc3545;
}
.badge-icon {
  width: 10px;
  height: 11px;
  margin-right: 3px;
}
.amount-in {
  color: #198754;
  font-size: 15px;
  font-weight: 700;
}
.amount-out {
  color: #dc3545;
  font-size: 15px;
  font-weight: 700;
}
.actions {
  display: inline-flex;
  height: 29px;
  vertical-align: top;
}
.act {
  width: 31px;
  display: flex;
  align-items: center;
  justify-content: center;
  background: #fff;
  border: 1px solid;
  margin-left: -1px;
}
.act .icon {
  width: 15px;
  height: 14px;
}
.act-view {
  color: #0dcaf0;
  border-radius: 4px 0 0 4px;
  margin-left: 0;
}
.act-edit {
  color: #ffc107;
  width: 32px;
}
.act-del {
  color: #dc3545;
  width: 29px;
  border-radius: 0 4px 4px 0;
}
.pagination {
  margin-top: 15px;
  display: flex;
  justify-content: center;
}
.page-link {
  height: 36px;
  min-width: 32px;
  padding: 0 10px;
  border: 1px solid #dee2e6;
  margin-left: -1px;
  color: #0d6efd;
  font-size: 14.200px;
  display: flex;
  align-items: center;
  justify-content: center;
}
.page-link:last-child {
  border-radius: 0 5px 5px 0;
}
.page-active {
  background: #0d6efd;
  border-color: #0d6efd;
  color: #fff;
  border-radius: 5px 0 0 5px;
  margin-left: 0;
}

/* scrollbar + screen edge */
.scrollbar {
  width: 19px;
  flex: none;
  background: #fafafa;
  display: flex;
  flex-direction: column;
  align-items: center;
  padding-top: 7px;
}
.sb-up {
  border-bottom: 5px solid #8c8c8c;
  border-left: 6px solid transparent;
  border-right: 6px solid transparent;
}
.sb-thumb {
  width: 11px;
  height: 795px;
  margin-top: 10px;
  background: #8c8c8c;
  border-radius: 6px;
}
.sb-down {
  margin-top: 101px;
  border-top: 5px solid #8c8c8c;
  border-left: 6px solid transparent;
  border-right: 6px solid transparent;
}
.taskstrip {
  height: 2px;
  flex: none;
  display: flex;
}
.ts-dark {
  background: #333;
}
.ts-light {
  background: #aaa;
}
.ts-mid {
  background: #666;
}
.ts-a {
  width: 45px;
}
.ts-b {
  width: 322px;
}
.ts-c {
  width: 373px;
}
.ts-d {
  width: 44px;
}
.ts-e {
  flex: 1;
}
```
